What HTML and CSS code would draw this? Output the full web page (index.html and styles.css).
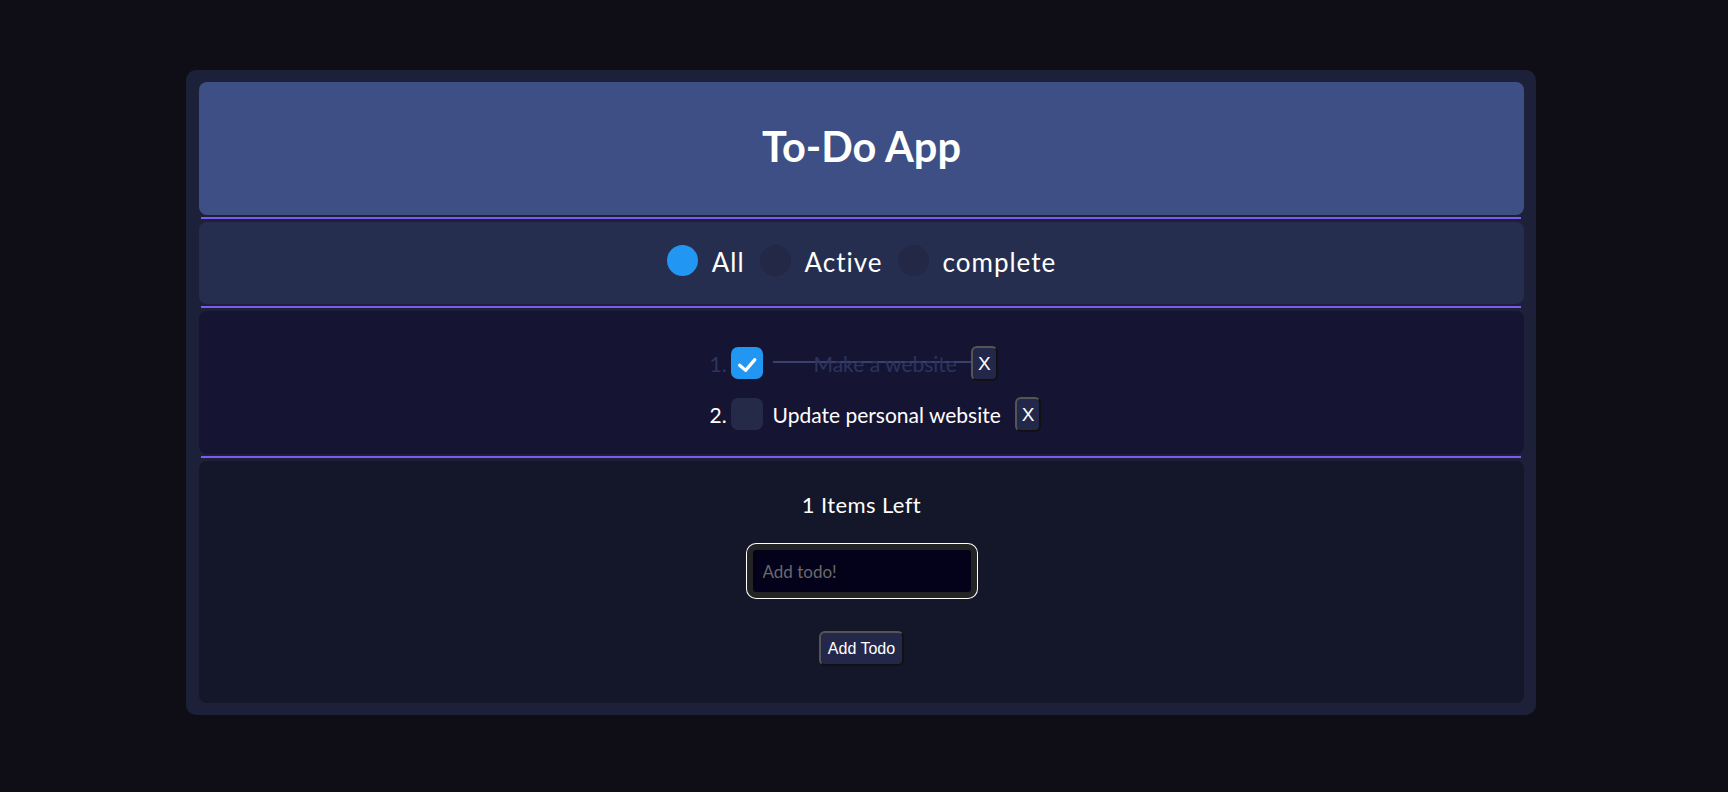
FILE: index.html
```html
<!DOCTYPE html>
<html lang="en">
<head>
<meta charset="utf-8">
<title>To-Do App</title>
<link rel="stylesheet" href="styles.css">
</head>
<body>
<div class="app">
  <header class="panel head"><h1 class="title">To-Do App</h1></header>
  <div class="rule"></div>
  <div class="panel filters">
    <label class="opt"><span class="radio on"></span><span class="opt-label">All</span></label>
    <label class="opt"><span class="radio"></span><span class="opt-label">Active</span></label>
    <label class="opt"><span class="radio"></span><span class="opt-label">complete</span></label>
  </div>
  <div class="rule"></div>
  <div class="panel list">
    <div class="todos">
      <div class="todo done">
        <span class="num">1.</span>
        <span class="box checked"><svg width="32" height="32" viewBox="0 0 32 32"><path d="M8.6 18.2 L14.6 23.4 L23.8 12.6" fill="none" stroke="#fff" stroke-width="3.2" stroke-linecap="round" stroke-linejoin="round"/></svg></span>
        <span class="text">Make a website</span>
        <button class="del">X</button>
      </div>
      <div class="todo">
        <span class="num">2.</span>
        <span class="box"></span>
        <span class="text">Update personal website</span>
        <button class="del">X</button>
      </div>
    </div>
  </div>
  <div class="rule"></div>
  <div class="panel foot">
    <p class="left">1 Items Left</p>
    <input class="new" type="text" placeholder="Add todo!">
    <button class="add">Add Todo</button>
  </div>
</div>
</body>
</html>
```
FILE: styles.css
```css
body {
  margin: 0;
  background: #0f0e17;
  font-family: Lato, "Noto Sans", sans-serif;
  color: #fffffe;
}

.app {
  width: 1350px;
  box-sizing: border-box;
  margin: 70px 0 0 186px;
  padding: 12px 12px 12px 13px;
  background: #1c2039;
  border-radius: 10px;
}

.panel {
  border-radius: 8px;
  box-sizing: border-box;
}

.rule {
  height: 2px;
  background: #7f5af0;
  margin: 2px 3px 3px 2px;
}

.head {
  height: 133px;
  background: #3d4f84;
  display: flex;
  align-items: center;
  justify-content: center;
  padding-bottom: 6px;
}

.title {
  margin: 0;
  font-size: 41.5px;
  font-weight: 700;
  line-height: 48px;
}

.filters {
  height: 82px;
  background: #262e50;
  display: flex;
  justify-content: center;
  align-items: flex-start;
  padding-top: 23px;
}

.opt {
  display: flex;
  align-items: center;
  gap: 14px;
  height: 30px;
  margin-right: 15px;
  font-size: 26px;
  letter-spacing: 1px;
}

.opt:last-child {
  margin-right: 0;
}

.opt-label {
  padding-top: 3px;
}

.radio {
  width: 31px;
  height: 31px;
  border-radius: 50%;
  background: #222845;
}

.radio.on {
  background: #2196f3;
}

.list {
  height: 143px;
  background: #161433;
  padding-top: 35px;
}

.todos {
  width: fit-content;
  margin: 0 auto;
  padding-left: 28px;
}

.todo {
  display: flex;
  align-items: center;
  height: 34px;
  font-size: 21px;
}

.todo + .todo {
  margin-top: 17px;
}

.num {
  width: 16px;
  margin-right: 5px;
}

.box {
  width: 32px;
  height: 32px;
  border-radius: 7px;
  background: #252a48;
  display: flex;
}

.box.checked {
  background: #2196f3;
}

.text {
  margin-left: 10px;
  padding-right: 14px;
}

.done {
  color: #2c345e;
}

.done .text {
  padding-left: 41px;
  background: linear-gradient(#38426f, #38426f) no-repeat 0 calc(50% - 1px) / 100% 2px;
}

.del {
  font-family: "Liberation Sans", Arial, sans-serif;
  font-size: 19px;
  line-height: 21px;
  color: #fffffe;
  background: #23284a;
  border: 2px solid #555;
  border-right-color: #111;
  border-bottom-color: #111;
  border-radius: 6px;
  padding: 5px 5px;
}

.foot {
  height: 242px;
  background: #131729;
  padding-top: 31px;
  display: flex;
  flex-direction: column;
  align-items: center;
}

.left {
  margin: 0;
  font-size: 22px;
  line-height: 25px;
  letter-spacing: 0.4px;
}

.new {
  margin-top: 27px;
  width: 230px;
  height: 54px;
  box-sizing: border-box;
  border: 6px solid #232323;
  border-radius: 9px;
  box-shadow: 0 0 0 1px #fffffe;
  background: #03021a;
  color: #fffffe;
  font-family: Lato, "Noto Sans", sans-serif;
  font-size: 17px;
  padding: 0 10px;
  outline: none;
}

.new::placeholder {
  color: #6a6a6a;
}

.add {
  margin-top: 33px;
  font-family: "Liberation Sans", Arial, sans-serif;
  font-size: 16px;
  line-height: 18px;
  color: #fffffe;
  background: #23284a;
  border: 2px solid #555;
  border-right-color: #111;
  border-bottom-color: #111;
  border-radius: 6px;
  padding: 7px 7px 6px;
}
```
